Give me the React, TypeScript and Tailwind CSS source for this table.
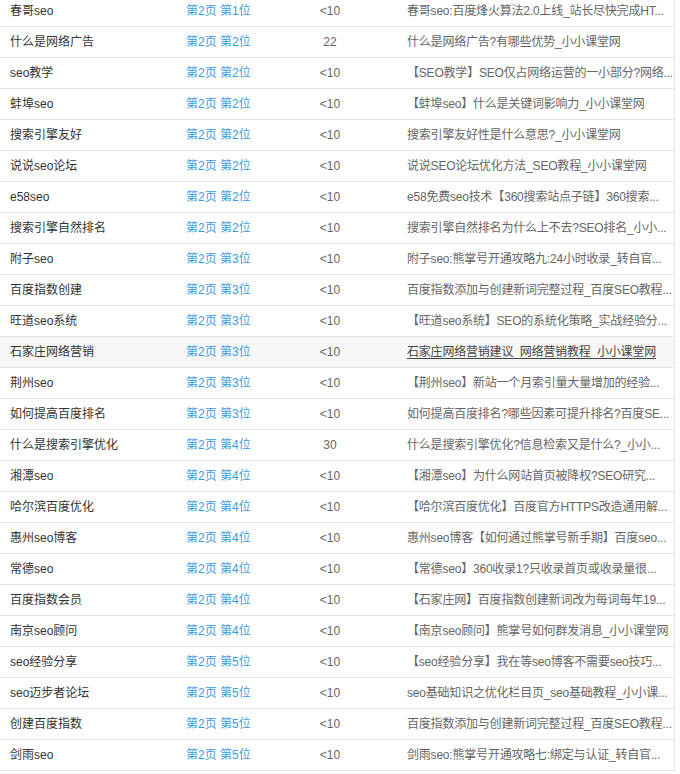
const rows: [string, string, string, string][] = [
  ["春哥seo", "第2页 第1位", "<10", "春哥seo:百度烽火算法2.0上线_站长尽快完成HT..."],
  ["什么是网络广告", "第2页 第2位", "22", "什么是网络广告?有哪些优势_小小课堂网"],
  ["seo教学", "第2页 第2位", "<10", "【SEO教学】SEO仅占网络运营的一小部分?网络..."],
  ["蚌埠seo", "第2页 第2位", "<10", "【蚌埠seo】什么是关键词影响力_小小课堂网"],
  ["搜索引擎友好", "第2页 第2位", "<10", "搜索引擎友好性是什么意思?_小小课堂网"],
  ["说说seo论坛", "第2页 第2位", "<10", "说说SEO论坛优化方法_SEO教程_小小课堂网"],
  ["e58seo", "第2页 第2位", "<10", "e58免费seo技术【360搜索站点子链】360搜索..."],
  ["搜索引擎自然排名", "第2页 第2位", "<10", "搜索引擎自然排名为什么上不去?SEO排名_小小..."],
  ["附子seo", "第2页 第3位", "<10", "附子seo:熊掌号开通攻略九:24小时收录_转自官..."],
  ["百度指数创建", "第2页 第3位", "<10", "百度指数添加与创建新词完整过程_百度SEO教程..."],
  ["旺道seo系统", "第2页 第3位", "<10", "【旺道seo系统】SEO的系统化策略_实战经验分..."],
  ["石家庄网络营销", "第2页 第3位", "<10", "石家庄网络营销建议_网络营销教程_小小课堂网"],
  ["荆州seo", "第2页 第3位", "<10", "【荆州seo】新站一个月索引量大量增加的经验..."],
  ["如何提高百度排名", "第2页 第3位", "<10", "如何提高百度排名?哪些因素可提升排名?百度SE..."],
  ["什么是搜索引擎优化", "第2页 第4位", "30", "什么是搜索引擎优化?信息检索又是什么?_小小..."],
  ["湘潭seo", "第2页 第4位", "<10", "【湘潭seo】为什么网站首页被降权?SEO研究..."],
  ["哈尔滨百度优化", "第2页 第4位", "<10", "【哈尔滨百度优化】百度官方HTTPS改造通用解..."],
  ["惠州seo博客", "第2页 第4位", "<10", "惠州seo博客【如何通过熊掌号新手期】百度seo..."],
  ["常德seo", "第2页 第4位", "<10", "【常德seo】360收录1?只收录首页或收录量很..."],
  ["百度指数会员", "第2页 第4位", "<10", "【石家庄网】百度指数创建新词改为每词每年19..."],
  ["南京seo顾问", "第2页 第4位", "<10", "【南京seo顾问】熊掌号如何群发消息_小小课堂网"],
  ["seo经验分享", "第2页 第5位", "<10", "【seo经验分享】我在等seo博客不需要seo技巧..."],
  ["seo迈步者论坛", "第2页 第5位", "<10", "seo基础知识之优化栏目页_seo基础教程_小小课..."],
  ["创建百度指数", "第2页 第5位", "<10", "百度指数添加与创建新词完整过程_百度SEO教程..."],
  ["剑雨seo", "第2页 第5位", "<10", "剑雨seo:熊掌号开通攻略七:绑定与认证_转自官..."],
]

// row 12 is under the mouse in the screenshot
const hovered = 11

export default function App() {
  return (
    <div className="h-[774px] overflow-hidden bg-white font-['Liberation_Sans','Noto_Sans_CJK_SC',sans-serif] text-[12px]">
      <div className="-mt-1 w-[675px] border-r border-[#e6e6e6]">
        {rows.map(([keyword, rank, index, title], i) => (
          <div
            key={i}
            className={`grid h-[31px] grid-cols-[176px_87px_134px_1fr] items-center border-b border-[#e3e3e3] ${
              i === hovered ? "bg-[#f7f7f7]" : ""
            }`}
          >
            <div className="whitespace-nowrap pl-[10px] text-[#333]">{keyword}</div>
            <div className="whitespace-nowrap pl-[10px] text-[#3d9be6]">{rank}</div>
            <div className="text-center text-[#666]">{index}</div>
            <div
              className={`whitespace-nowrap pl-[10px] tracking-[-0.2px] ${
                i === hovered ? "text-[#444] underline underline-offset-2" : "text-[#666]"
              }`}
            >
              {title}
            </div>
          </div>
        ))}
      </div>
    </div>
  )
}
